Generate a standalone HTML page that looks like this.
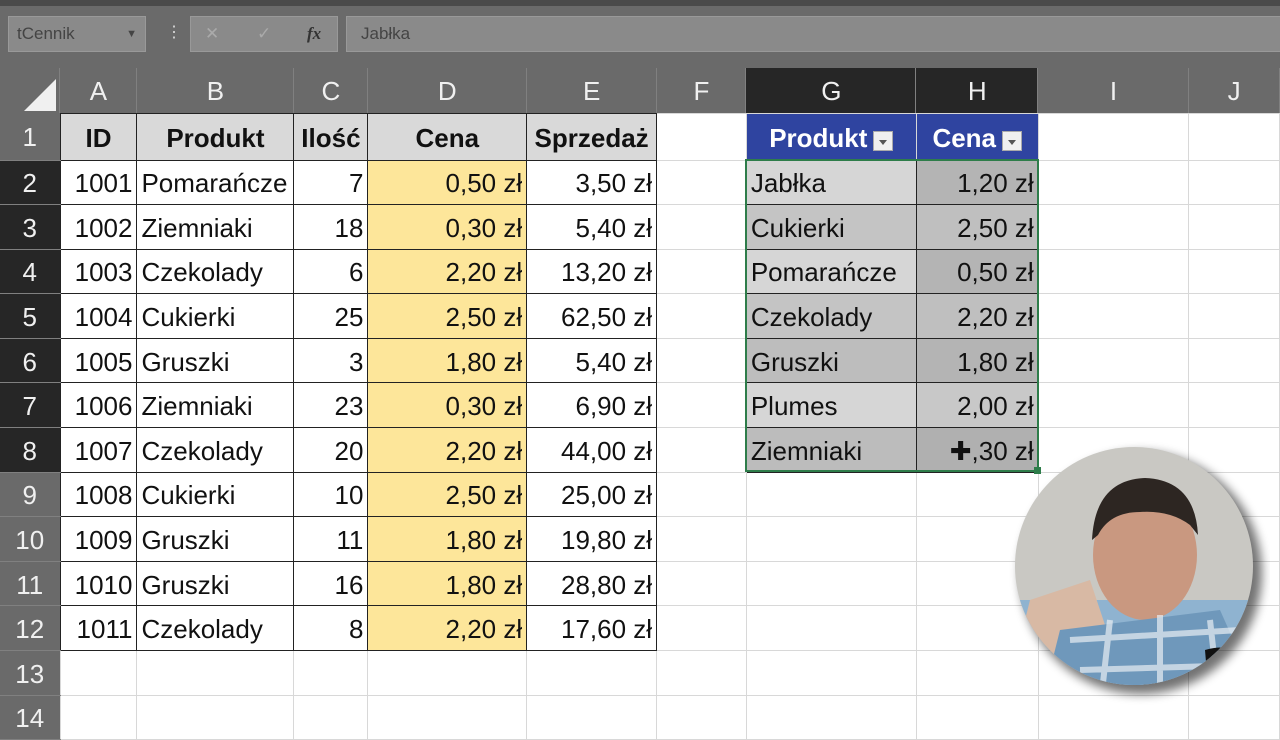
<!DOCTYPE html>
<html><head><meta charset="utf-8"><style>
*{margin:0;padding:0;box-sizing:border-box}
body{width:1280px;height:720px;overflow:hidden;background:#fff;position:relative;font-family:"Liberation Sans Narrow","Liberation Sans",sans-serif}
.top{position:absolute;left:0;top:0;width:1280px;height:68px;background:#6a6a6a}
.top .band{position:absolute;left:0;top:0;width:1280px;height:6px;background:#4a4a4a}
.box{position:absolute;top:16px;height:36px;background:#8a8a8a;border:1px solid #999;color:#444;font-family:"Liberation Sans",sans-serif;font-size:17px;line-height:34px}
table{position:absolute;left:0;top:68px;border-collapse:collapse;table-layout:fixed}
td{font-size:26px;white-space:nowrap;overflow:hidden;padding:3px 4px 0 4px;color:#111;border:1px solid #d8d8d8}
tr.h td{background:#6a6a6a;color:#f0f0f0;text-align:center;border:none;box-shadow:inset -1px 0 0 #808080;height:45px}
td.rh{background:#6a6a6a;color:#f0f0f0;text-align:center;border:none;border-bottom:1px solid #808080}
td.rh.s{background:#262626}
tr.h td.s{background:#262626}
.b{border:1px solid #222}
.r{text-align:right}
.y{background:#fde69a}
.hd{background:#d9d9d9;font-weight:bold;text-align:center}
.bl{background:#2f44a0;color:#fff;font-weight:bold;text-align:center;position:relative}
.dd{display:inline-block;width:20px;height:20px;background:#f0f0f0;border:1px solid #aaa;vertical-align:-4px;margin-left:6px;position:relative}
.dd:after{content:"";position:absolute;left:5px;top:8px;border-left:4px solid transparent;border-right:4px solid transparent;border-top:5px solid #555}
.g1{background:#d6d6d6}.g2{background:#c4c4c4}.h1{background:#b4b4b4}.h2{background:#bfbfbf}
</style></head><body>
<div class="top"><div class="band"></div>
<div class="box" style="left:8px;width:138px;padding-left:8px">tCennik<span style="position:absolute;right:8px;top:0;font-size:11px">▼</span></div>
<div style="position:absolute;left:166px;top:22px;color:#ddd;font-size:16px">⋮</div>
<div class="box" style="left:190px;width:148px;color:#aaa"><span style="position:absolute;left:14px">✕</span><span style="position:absolute;left:66px">✓</span><span style="position:absolute;left:116px;color:#333;font-style:italic;font-family:'Liberation Serif',serif;font-weight:bold">fx</span></div>
<div class="box" style="left:346px;width:940px;padding-left:14px">Jabłka</div>
</div>
<table>
<colgroup><col style="width:59px"><col style="width:77px"><col style="width:157px"><col style="width:74px"><col style="width:159px"><col style="width:130px"><col style="width:90px"><col style="width:170px"><col style="width:122px"><col style="width:151px"><col style="width:91px"></colgroup>
<tr class="h"><td><div style="width:0;height:0;border-left:32px solid transparent;border-bottom:32px solid #f0f0f0;margin:6px 0 0 20px"></div></td><td>A</td><td>B</td><td>C</td><td>D</td><td>E</td><td>F</td><td class="s">G</td><td class="s">H</td><td>I</td><td>J</td></tr>
<tr style="height:47px"><td class="rh">1</td><td class="hd b">ID</td><td class="hd b">Produkt</td><td class="hd b">Ilość</td><td class="hd b">Cena</td><td class="hd b">Sprzedaż</td><td></td><td class="bl">Produkt<span class="dd"></span></td><td class="bl">Cena<span class="dd"></span></td><td></td><td></td></tr>
<tr style="height:44.6px"><td class="rh s">2</td><td class="b r">1001</td><td class="b">Pomarańcze</td><td class="b r">7</td><td class="b r y">0,50 zł</td><td class="b r">3,50 zł</td><td></td><td class="b g1">Jabłka</td><td class="b r h1">1,20 zł</td><td></td><td></td></tr>
<tr style="height:44.6px"><td class="rh s">3</td><td class="b r">1002</td><td class="b">Ziemniaki</td><td class="b r">18</td><td class="b r y">0,30 zł</td><td class="b r">5,40 zł</td><td></td><td class="b g2">Cukierki</td><td class="b r h2">2,50 zł</td><td></td><td></td></tr>
<tr style="height:44.6px"><td class="rh s">4</td><td class="b r">1003</td><td class="b">Czekolady</td><td class="b r">6</td><td class="b r y">2,20 zł</td><td class="b r">13,20 zł</td><td></td><td class="b g1">Pomarańcze</td><td class="b r h1">0,50 zł</td><td></td><td></td></tr>
<tr style="height:44.6px"><td class="rh s">5</td><td class="b r">1004</td><td class="b">Cukierki</td><td class="b r">25</td><td class="b r y">2,50 zł</td><td class="b r">62,50 zł</td><td></td><td class="b g2">Czekolady</td><td class="b r h2">2,20 zł</td><td></td><td></td></tr>
<tr style="height:44.6px"><td class="rh s">6</td><td class="b r">1005</td><td class="b">Gruszki</td><td class="b r">3</td><td class="b r y">1,80 zł</td><td class="b r">5,40 zł</td><td></td><td class="b g2" style="background:#bdbdbd">Gruszki</td><td class="b r h1">1,80 zł</td><td></td><td></td></tr>
<tr style="height:44.6px"><td class="rh s">7</td><td class="b r">1006</td><td class="b">Ziemniaki</td><td class="b r">23</td><td class="b r y">0,30 zł</td><td class="b r">6,90 zł</td><td></td><td class="b g1">Plumes</td><td class="b r h2" style="background:#c8c8c8">2,00 zł</td><td></td><td></td></tr>
<tr style="height:44.6px"><td class="rh s">8</td><td class="b r">1007</td><td class="b">Czekolady</td><td class="b r">20</td><td class="b r y">2,20 zł</td><td class="b r">44,00 zł</td><td></td><td class="b g2" style="background:#bcbcbc">Ziemniaki</td><td class="b r h1" style="background:#b0b0b0">✚,30 zł</td><td></td><td></td></tr>
<tr style="height:44.6px"><td class="rh">9</td><td class="b r">1008</td><td class="b">Cukierki</td><td class="b r">10</td><td class="b r y">2,50 zł</td><td class="b r">25,00 zł</td><td></td><td></td><td></td><td></td><td></td></tr>
<tr style="height:44.6px"><td class="rh">10</td><td class="b r">1009</td><td class="b">Gruszki</td><td class="b r">11</td><td class="b r y">1,80 zł</td><td class="b r">19,80 zł</td><td></td><td></td><td></td><td></td><td></td></tr>
<tr style="height:44.6px"><td class="rh">11</td><td class="b r">1010</td><td class="b">Gruszki</td><td class="b r">16</td><td class="b r y">1,80 zł</td><td class="b r">28,80 zł</td><td></td><td></td><td></td><td></td><td></td></tr>
<tr style="height:44.6px"><td class="rh">12</td><td class="b r">1011</td><td class="b">Czekolady</td><td class="b r">8</td><td class="b r y">2,20 zł</td><td class="b r">17,60 zł</td><td></td><td></td><td></td><td></td><td></td></tr>
<tr style="height:44.6px"><td class="rh">13</td><td></td><td></td><td></td><td></td><td></td><td></td><td></td><td></td><td></td><td></td></tr>
<tr style="height:44.6px"><td class="rh">14</td><td></td><td></td><td></td><td></td><td></td><td></td><td></td><td></td><td></td><td></td></tr>
</table>
<div style="position:absolute;left:745px;top:159px;width:294px;height:313px;border:2px solid #2e7d4a"></div>
<div style="position:absolute;left:1034px;top:467px;width:7px;height:7px;background:#2e7d4a"></div>
<svg style="position:absolute;left:1000px;top:440px" width="270" height="270">
<defs><filter id="sh"><feGaussianBlur stdDeviation="5"/></filter><clipPath id="c"><circle cx="134" cy="126" r="119"/></clipPath></defs>
<circle cx="141" cy="133" r="121" fill="#000" opacity="0.55" filter="url(#sh)"/>
<g clip-path="url(#c)">
<rect x="0" y="0" width="270" height="270" fill="#c9c8c3"/>
<rect x="10" y="160" width="260" height="110" fill="#8fb3d0"/>
<path d="M30 160 L90 140 L110 200 L60 260 L10 240Z" fill="#d8b9a4"/>
<ellipse cx="145" cy="115" rx="52" ry="65" fill="#c99880"/>
<path d="M92 100 Q95 40 145 38 Q195 40 198 95 L190 85 Q170 70 140 72 Q110 72 98 95Z" fill="#2d2622"/>
<path d="M60 190 L220 170 L260 260 L40 270Z" fill="#6f98bb"/>
<path d="M70 200 L240 190 M80 230 L250 225 M110 180 L100 270 M160 175 L160 270 M210 180 L220 270" stroke="#e8eef3" stroke-width="6" opacity=".7"/>
<path d="M205 210 Q240 200 250 230 L250 270 L210 270Z" fill="#111"/>
</g>
</svg>
</body></html>
